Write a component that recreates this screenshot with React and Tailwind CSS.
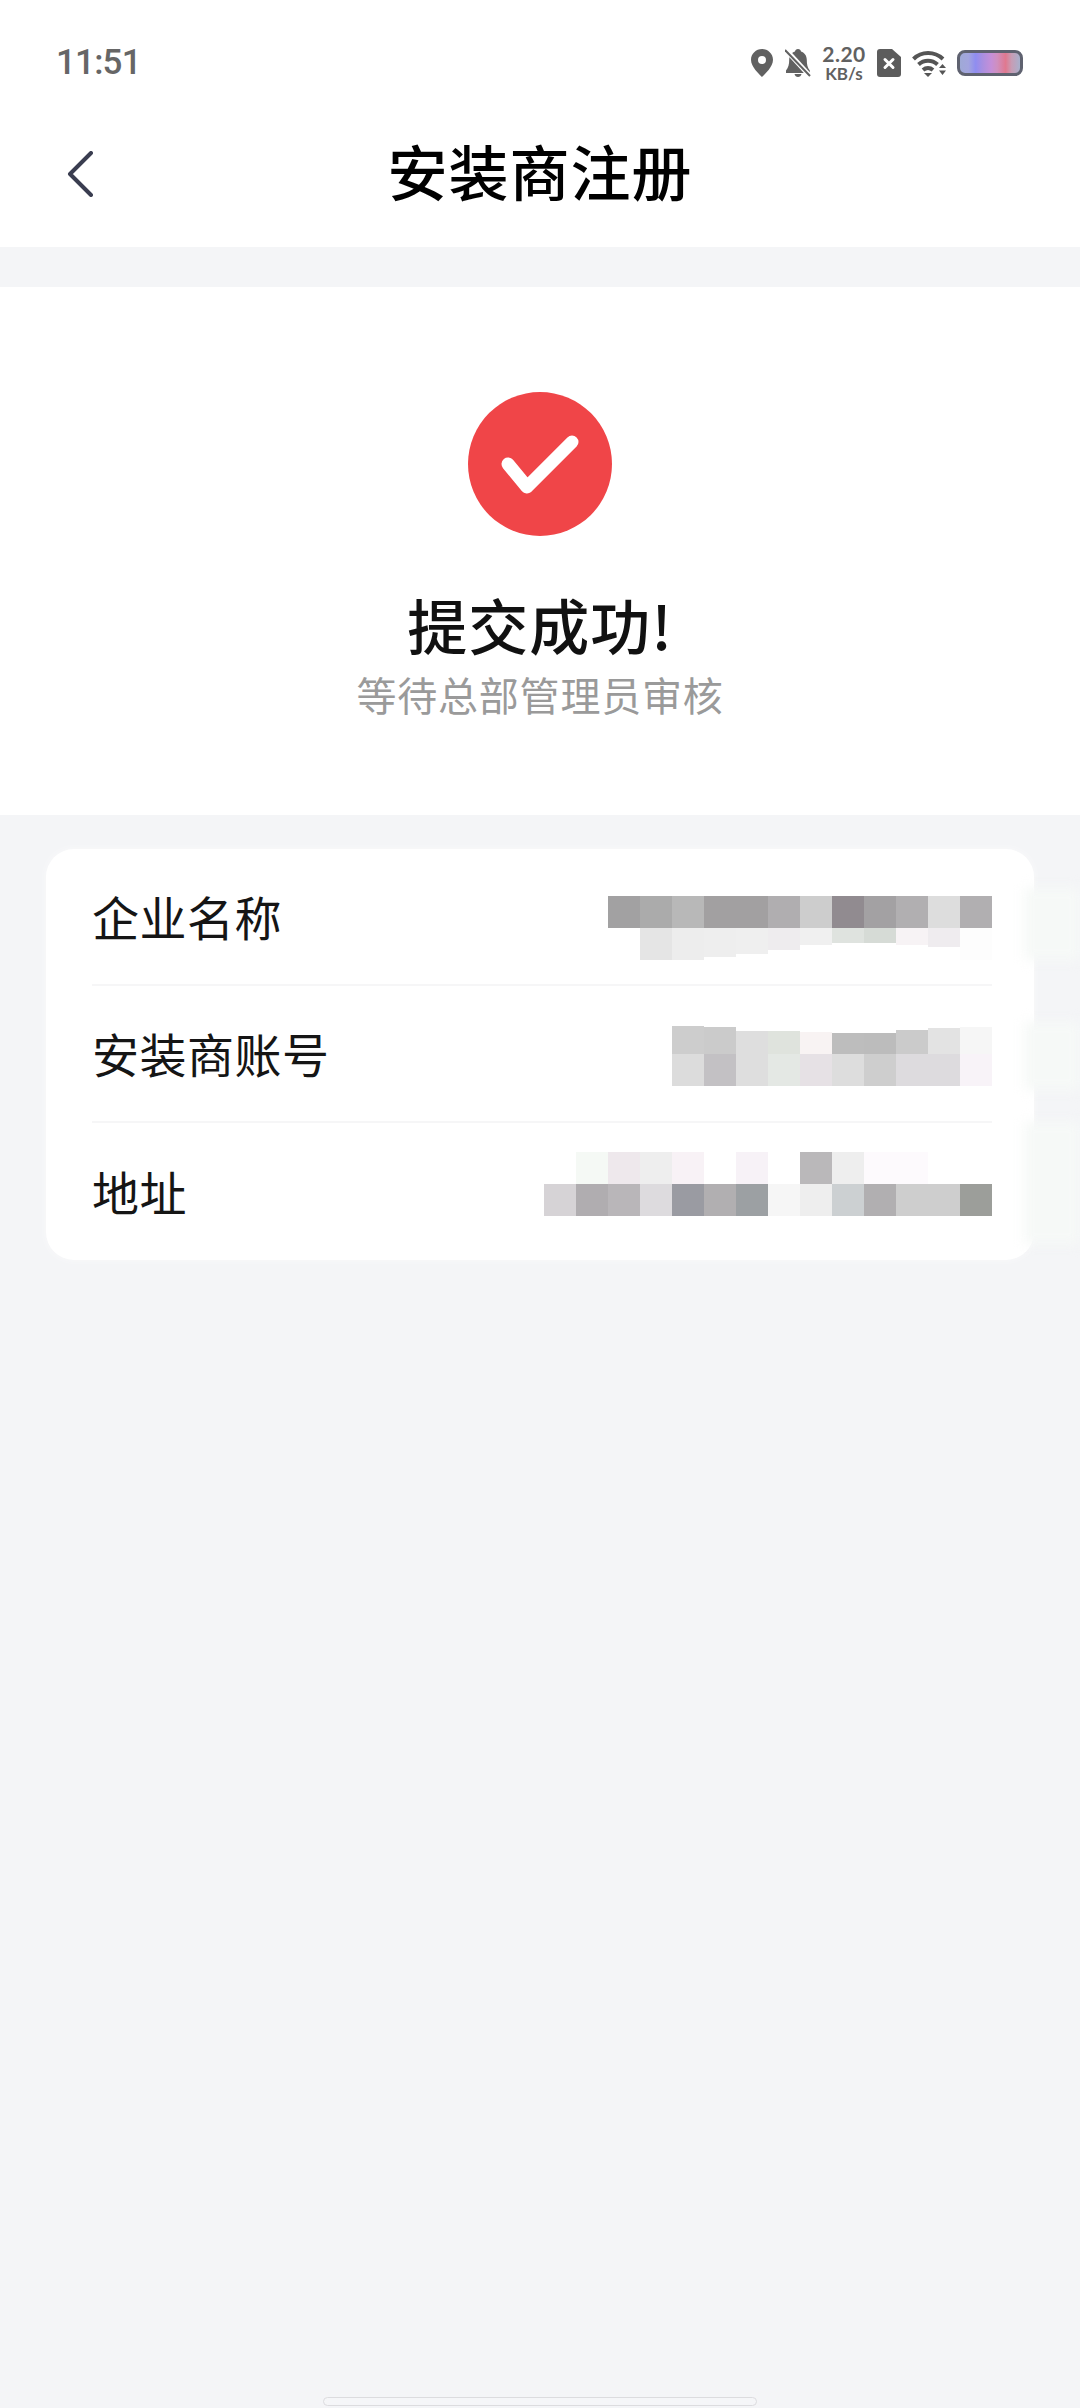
const cjk = "font-['Noto_Sans_CJK_SC','Noto_Sans',sans-serif]";

const company = [
  [
    ["bg-[#a2a1a2]", "h-8"], ["bg-[#ababab]", "h-8"], ["bg-[#b8b8b8]", "h-8"], ["bg-[#a2a0a1]", "h-8"],
    ["bg-[#a2a0a1]", "h-8"], ["bg-[#b0aeb0]", "h-8"], ["bg-[#cdcdcd]", "h-8"], ["bg-[#918b90]", "h-8"],
    ["bg-[#a3a1a3]", "h-8"], ["bg-[#b1afb1]", "h-8"], ["bg-[#dddddd]", "h-8"], ["bg-[#b1afb1]", "h-8"],
  ],
  [
    ["bg-transparent", "h-8"], ["bg-[#e5e5e5]", "h-8"], ["bg-[#ededed]", "h-8"], ["bg-[#eeeeee]", "h-[29px]"],
    ["bg-[#efefef]", "h-[26px]"], ["bg-[#eeecee]", "h-[22px]"], ["bg-[#f0f0f0]", "h-[17px]"], ["bg-[#dfe3df]", "h-[15px]"],
    ["bg-[#d6dbd6]", "h-[15px]"], ["bg-[#f7f3f5]", "h-[17px]"], ["bg-[#efecef]", "h-[19px]"], ["bg-[#fdfdfd]", "h-8"],
  ],
];

const account = [
  [
    ["bg-[#cdcdcd]", "h-[28px]"], ["bg-[#cbcbcb]", "h-[27px]"], ["bg-[#dedede]", "h-[23px]"], ["bg-[#dfe3dd]", "h-[23px]"],
    ["bg-[#f8f3f3]", "h-[22px]"], ["bg-[#bdbdbd]", "h-[21px]"], ["bg-[#bcbcbc]", "h-[21px]"], ["bg-[#cbcbcb]", "h-[24px]"],
    ["bg-[#e3e3e3]", "h-[26px]"], ["bg-[#f6f6f6]", "h-[27px]"],
  ],
  [
    ["bg-[#dcdcdc]", "h-8"], ["bg-[#c3c1c4]", "h-8"], ["bg-[#dedede]", "h-8"], ["bg-[#e4e8e4]", "h-8"],
    ["bg-[#e6e1e5]", "h-8"], ["bg-[#dddddd]", "h-8"], ["bg-[#cecece]", "h-8"], ["bg-[#dddbde]", "h-8"],
    ["bg-[#dddbde]", "h-8"], ["bg-[#f8f3f8]", "h-8"],
  ],
];

const address = [
  [
    ["bg-transparent", "h-8"], ["bg-[#f5f9f5]", "h-8"], ["bg-[#eee8ec]", "h-8"], ["bg-[#eeeeee]", "h-8"],
    ["bg-[#f8f2f6]", "h-8"], ["bg-transparent", "h-8"], ["bg-[#f7f2f7]", "h-8"], ["bg-transparent", "h-8"],
    ["bg-[#bab8ba]", "h-8"], ["bg-[#eeeeee]", "h-8"], ["bg-[#fdfafd]", "h-8"], ["bg-[#fdfafd]", "h-8"],
    ["bg-transparent", "h-8"], ["bg-transparent", "h-8"],
  ],
  [
    ["bg-[#d6d3d6]", "h-8"], ["bg-[#b0adb0]", "h-8"], ["bg-[#b9b6b9]", "h-8"], ["bg-[#dddbde]", "h-8"],
    ["bg-[#9a9ba2]", "h-8"], ["bg-[#b1afb1]", "h-8"], ["bg-[#9ca0a3]", "h-8"], ["bg-[#f6f6f6]", "h-8"],
    ["bg-[#eeeeee]", "h-8"], ["bg-[#ccd0d2]", "h-8"], ["bg-[#b1afb1]", "h-8"], ["bg-[#cecece]", "h-8"],
    ["bg-[#cecece]", "h-8"], ["bg-[#9c9e9a]", "h-8"],
  ],
];

function Mosaic({ rows, align, offset }) {
  return (
    <div className={`flex flex-col self-start ${offset}`}>
      {rows.map((row, i) => (
        <div key={i} className={`flex h-8 ${i === 0 ? align : "items-start"}`}>
          {row.map(([color, height], j) => (
            <div key={j} className={`w-8 ${color} ${height}`} />
          ))}
        </div>
      ))}
    </div>
  );
}

function InfoRow({ label, rows, align = "items-start", offset, last }) {
  return (
    <div className={`flex h-[137px] justify-between ${last ? "" : "border-b-2 border-[#f6f6f7]"}`}>
      <span className={`${cjk} mb-[2px] self-center text-[47px] leading-[60px] tracking-[0.5px] text-[#151515]`}>{label}</span>
      <Mosaic rows={rows} align={align} offset={offset} />
    </div>
  );
}

function StatusIcons() {
  return (
    <div className="flex items-center">
      <svg width="22" height="28" viewBox="0 0 22 28">
        <path
          fillRule="evenodd"
          fill="#616161"
          d="M11 0C5 0 0 4.800 0 10.800 0 18 8 25 11 28c3-3 11-10 11-17.200C22 4.800 17 0 11 0Zm0 7a4 4 0 1 1 0 8 4 4 0 0 1 0-8Z"
        />
      </svg>
      <svg width="26" height="28" viewBox="0 0 26 28" className="ml-[12px]">
        <path fill="#616161" d="M13 0c1.700 0 2.800 1 3 2.500 3.800 1.200 5.800 4.500 5.800 8.500 0 4 .6 7.500 3 10.500V24H1v-2.500c2.400-3 3.200-6.500 3.200-10.500 0-4 2-7.300 5.800-8.500C10.200 1 11.300 0 13 0Z" />
        <path fill="#616161" d="M9.500 25h7c-.4 1.800-1.800 3-3.500 3s-3.100-1.200-3.500-3Z" />
        <path stroke="#ffffff" strokeWidth="5" d="M1 1 25 27" />
        <path stroke="#616161" strokeWidth="2" d="M0 1 25 27" />
      </svg>
      <div className="ml-[11px] flex w-[44px] flex-col items-center font-['Lato',sans-serif] font-bold text-[#616161]">
        <span className="text-[21px] leading-[22px] tracking-[0.5px]">2.20</span>
        <span className="text-[17px] leading-[18px]">KB/s</span>
      </div>
      <svg width="24" height="28" viewBox="0 0 24 28" className="ml-[11px]">
        <path fill="#5c5c5c" d="M3 0h12l9 8v17a3 3 0 0 1-3 3H3a3 3 0 0 1-3-3V3a3 3 0 0 1 3-3Z" />
        <path stroke="#ffffff" strokeWidth="3" strokeLinecap="round" d="M8 10.500l8 8M16 10.500l-8 8" />
      </svg>
      <svg width="36" height="27" viewBox="0 0 36 27" className="ml-[11px]">
        <path fill="none" stroke="#555555" strokeWidth="4" d="M1.500 9C9.500 1 22.500 1 31 9" />
        <path fill="none" stroke="#555555" strokeWidth="4" d="M6.500 14.500c5.500-5 13.500-5 19 0" />
        <path fill="none" stroke="#555555" strokeWidth="4" d="M11 20c3-2.600 7-2.600 10 0" />
        <path fill="#555555" d="M12 23h8l-4 4ZM27 18l3.500-4 3.500 4ZM27 20.500h7L30.500 25Z" />
      </svg>
      <div className="ml-[9px] h-[26px] w-[66px] overflow-hidden rounded-[8px] border-[3px] border-[#5f6270] bg-[linear-gradient(90deg,#9fa9d6_0%,#a3a5de_14%,#8f8df0_26%,#aa8fe0_38%,#c58fd8_52%,#cf8fbf_62%,#e0788f_76%,#c79db5_86%,#a8b0cc_100%)]" />
    </div>
  );
}

export default function App() {
  return (
    <div className="relative flex min-h-[2408px] w-[1080px] flex-col overflow-hidden bg-[#f4f5f7]">
      <header className="bg-white">
        <div className="flex h-[100px] items-center justify-between pt-[26px] pr-[57px] pl-[56px]">
          <span className="font-['Roboto',sans-serif] text-[35px] font-medium tracking-[-0.8px] text-[#666666]">11:51</span>
          <StatusIcons />
        </div>
        <div className="grid h-[147px] grid-cols-[1fr_auto_1fr] items-center">
          <svg width="28" height="46" viewBox="0 0 28 46" className="ml-[66px]">
            <path d="M25 2 4 23l21 21" fill="none" stroke="#3a3d50" strokeWidth="4" strokeLinecap="round" strokeLinejoin="round" />
          </svg>
          <h1 className={`${cjk} mb-[7px] text-[60px] leading-[70px] font-medium tracking-[1px] text-black`}>安装商注册</h1>
          <div />
        </div>
      </header>

      <section className="mt-10 flex h-[528px] flex-col items-center bg-white pt-[105px]">
        <div className="flex h-[144px] w-[144px] items-center justify-center rounded-full bg-[#f04548]">
          <svg width="84" height="68" viewBox="0 0 84 68">
            <path d="M10 34 29 57 74 12" fill="none" stroke="#ffffff" strokeWidth="13" strokeLinecap="round" strokeLinejoin="round" />
          </svg>
        </div>
        <h2 className={`${cjk} mt-[53px] text-[60px] leading-[70px] font-medium tracking-[1px] text-[#111111]`}>提交成功!</h2>
        <p className={`${cjk} mt-[10px] text-[40px] leading-[50px] tracking-[0.8px] text-[#9a9a9a]`}>等待总部管理员审核</p>
      </section>

      <section className="mt-[34px] ml-[46px] w-[988px] rounded-[28px] bg-white pr-[42px] pl-[46px] shadow-[0_0_6px_#fafafb]">
        <InfoRow label="企业名称" rows={company} offset="mt-[47px]" />
        <InfoRow label="安装商账号" rows={account} align="items-end" offset="mt-[36px]" />
        <InfoRow label="地址" rows={address} offset="mt-[29px]" last />
      </section>

      <div className="absolute top-[888px] right-0 h-[72px] w-[56px] bg-[#f6f9f7] blur-[6px]" />
      <div className="absolute top-[1022px] right-0 h-[68px] w-[56px] bg-[#f6f9f7] blur-[6px]" />
      <div className="absolute top-[1122px] right-0 h-[122px] w-[56px] bg-[#f6f9f7] blur-[6px]" />

      <div className="absolute bottom-[2px] left-[323px] h-[9px] w-[434px] rounded-full border border-[#dcdcdf] bg-[#f5f6f8]" />
    </div>
  );
}
